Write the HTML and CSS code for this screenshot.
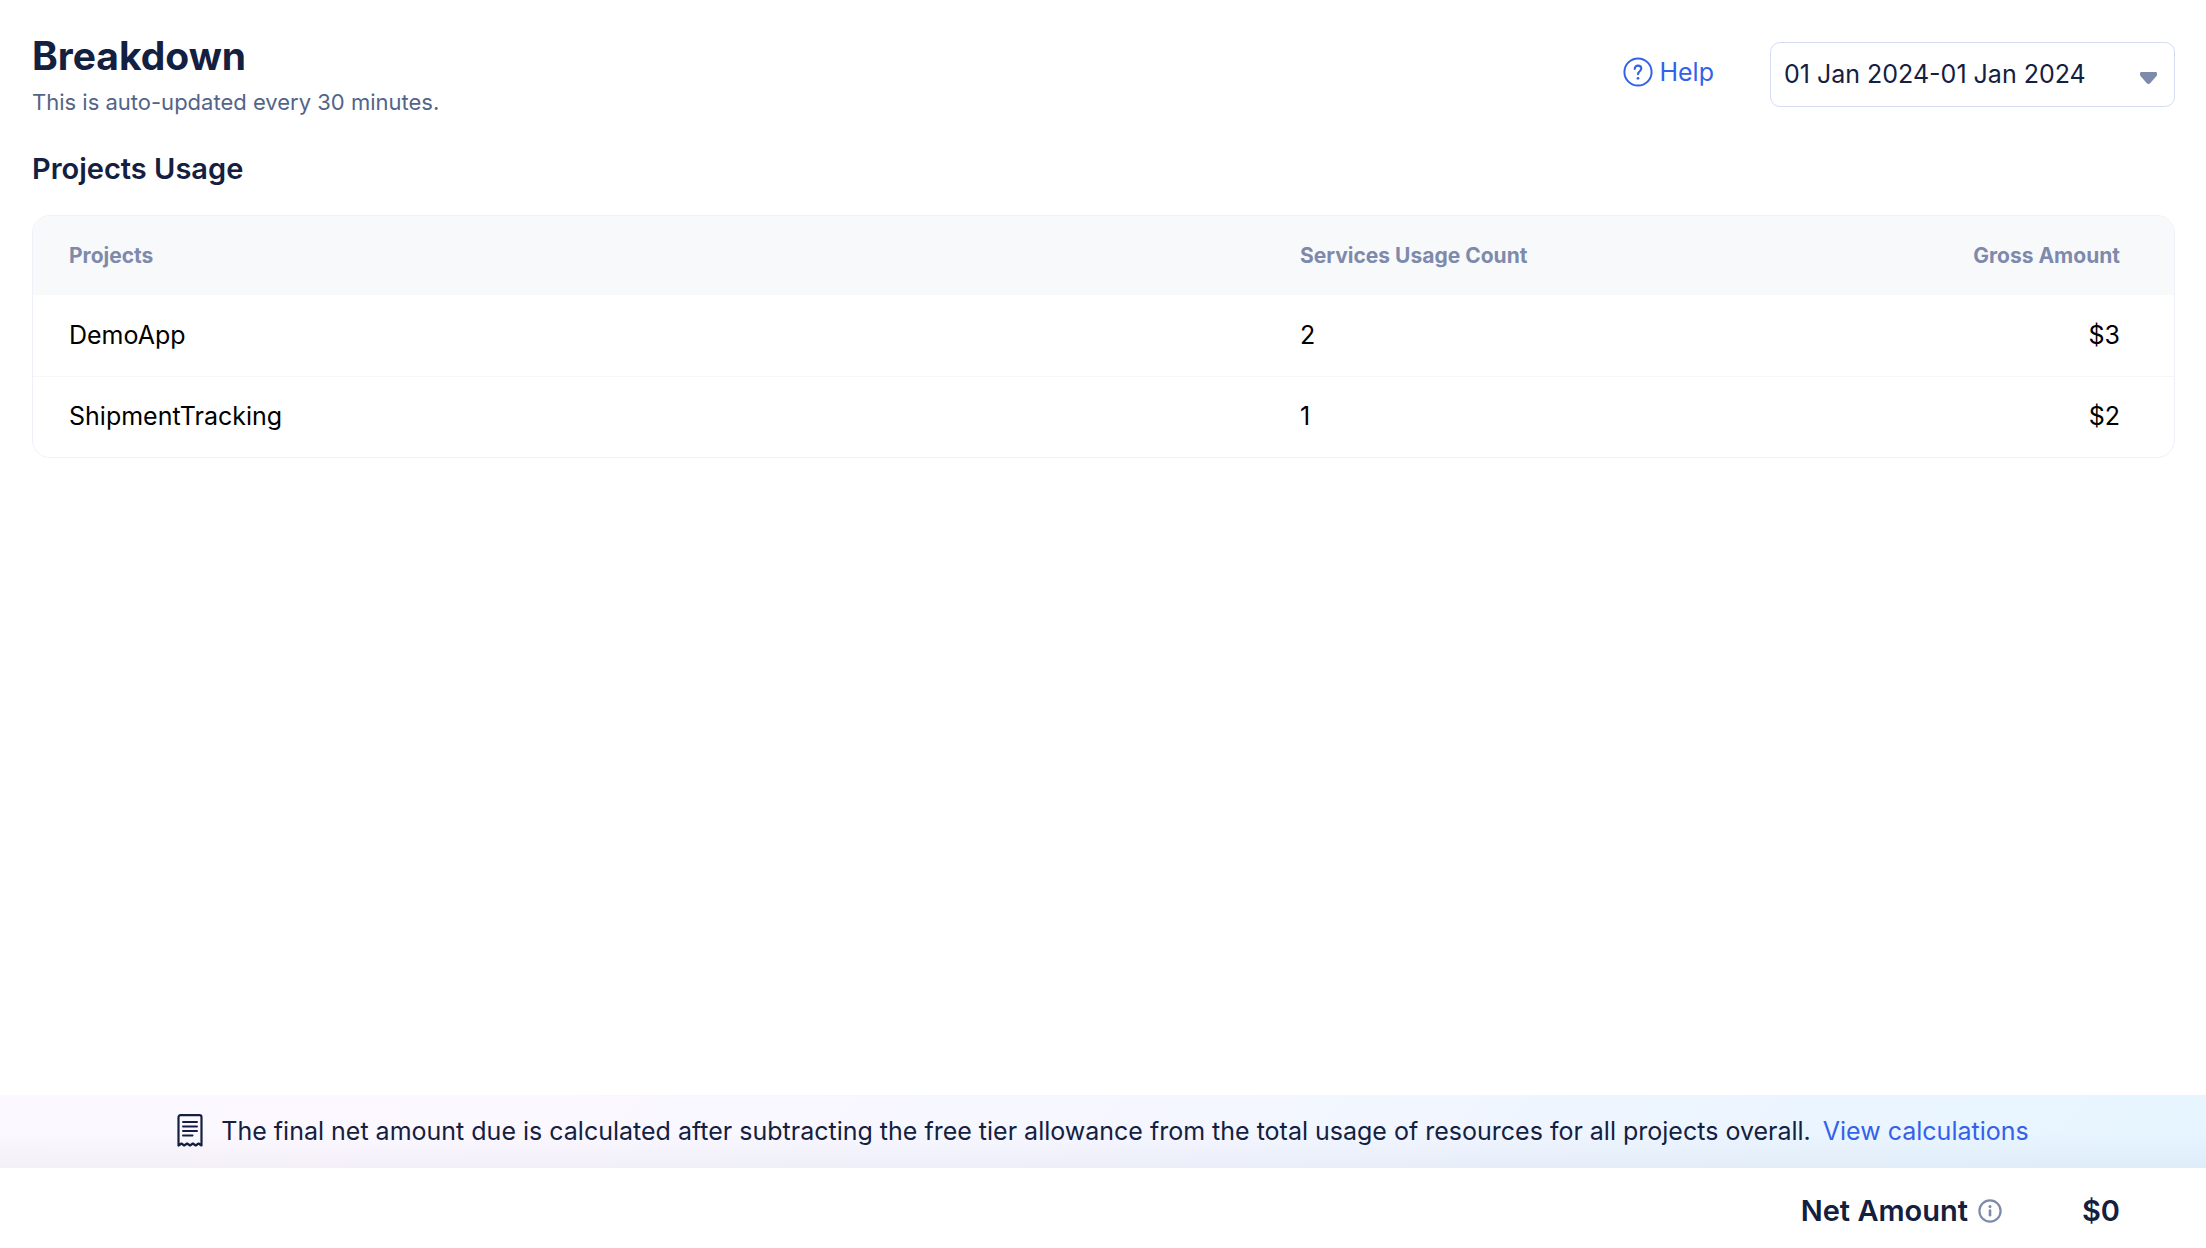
FILE: index.html
```html
<!DOCTYPE html>
<html lang="en">
<head>
<meta charset="utf-8">
<meta name="viewport" content="width=device-width, initial-scale=1">
<title>Breakdown</title>
<link rel="stylesheet" href="styles.css">
</head>
<body>
<main class="content">
  <header class="page-header">
    <div class="heading">
      <h1 class="title">Breakdown</h1>
      <p class="subtitle">This is auto-updated every 30 minutes.</p>
    </div>
    <div class="actions">
      <a class="help" href="#help">
        <svg class="help-icon" viewBox="0 0 30 30" aria-hidden="true">
          <circle cx="15" cy="15" r="13.6" fill="none" stroke="currentColor" stroke-width="2"/>
          <path d="M11.7 11.9c0-2 1.400-3.300 3.300-3.300s3.300 1.300 3.300 3c0 2.600-3.300 2.700-3.300 5.600" fill="none" stroke="currentColor" stroke-width="2.100" stroke-linecap="round"/>
          <circle cx="15" cy="21.300" r="1.400" fill="currentColor"/>
        </svg>
        <span>Help</span>
      </a>
      <div class="period">
        <select class="period-select" aria-label="Billing period">
          <option>01 Jan 2024-01 Jan 2024</option>
        </select>
        <svg class="period-arrow" viewBox="0 0 17 12" aria-hidden="true">
          <path d="M1.500 0h14c1 0 1.500.6 1.500 1.400v1.200c0 .5-.2.900-.5 1.300l-6.300 7.300c-.9 1-2.500 1-3.400 0L.5 3.900C.2 3.500 0 3.100 0 2.600V1.400C0 .6.500 0 1.500 0z" fill="currentColor"/>
        </svg>
      </div>
    </div>
  </header>
  <section class="usage">
    <h2 class="section-title">Projects Usage</h2>
    <div class="table-card">
      <table class="usage-table">
        <thead>
          <tr><th class="col-project" scope="col">Projects</th><th class="col-count" scope="col">Services Usage Count</th><th class="col-amount" scope="col">Gross Amount</th></tr>
        </thead>
        <tbody>
          <tr><td>DemoApp</td><td>2</td><td class="col-amount">$3</td></tr>
          <tr><td>ShipmentTracking</td><td>1</td><td class="col-amount">$2</td></tr>
        </tbody>
      </table>
    </div>
  </section>
</main>
<footer class="summary">
  <div class="notice">
    <svg class="receipt-icon" viewBox="0 0 26 33" aria-hidden="true" fill="none" stroke="currentColor" stroke-width="2.200" stroke-linejoin="round" stroke-linecap="round">
      <path d="M1.500 31.500V3.200a2 2 0 0 1 2-2h19a2 2 0 0 1 2 2v28.300l-2.900-2-2.900 2-2.800-2-2.900 2-2.900-2-2.900 2-2.800-2z"/>
      <path d="M6 8h14M6 12.500h14M6 17h14M6 21.500h9.500" stroke-width="2"/>
    </svg>
    <p class="notice-text">The final net amount due is calculated after subtracting the free tier allowance from the total usage of resources for all projects overall.</p>
    <a class="notice-link" href="#calculations">View calculations</a>
  </div>
  <div class="total">
    <span class="total-label">Net Amount</span>
    <button class="info" type="button" aria-label="About net amount">
      <svg class="info-icon" viewBox="0 0 24 24" aria-hidden="true">
        <circle cx="12" cy="12" r="10.600" fill="none" stroke="currentColor" stroke-width="2.200"/>
        <path d="M12 11.500v4.700" stroke="currentColor" stroke-width="2.600" stroke-linecap="round"/>
        <circle cx="12" cy="7.500" r="1.500" fill="currentColor"/>
      </svg>
    </button>
    <span class="total-value">$0</span>
  </div>
</footer>
</body>
</html>
```
FILE: styles.css
```css
* { box-sizing: border-box; }

body {
  margin: 0;
  min-height: 100vh;
  display: flex;
  flex-direction: column;
  background: #fff;
  color: #14203f;
  font-family: Inter, "Liberation Sans", sans-serif;
  font-size: 25px;
  line-height: 32px;
}

h1, h2, p { margin: 0; }

a { color: #3461ea; text-decoration: none; }

.content { flex: 1; padding: 32px 31px 32px 32px; }

.page-header {
  display: flex;
  justify-content: space-between;
  align-items: flex-start;
}

.title { font-size: 39px; line-height: 48px; font-weight: 700; }

.subtitle {
  margin-top: 6px;
  font-size: 22px;
  color: #536489;
}

.actions { display: flex; align-items: center; gap: 56px; padding-top: 10px; }

.help { display: flex; align-items: center; gap: 6px; padding-bottom: 5px; }

.help-icon { width: 30px; height: 30px; }

.period { position: relative; }

.period-select {
  appearance: none;
  display: block;
  width: 405px;
  height: 65px;
  padding: 0 48px 2px 13px;
  border: 1px solid #d6dcef;
  border-radius: 10px;
  background: #fff;
  color: inherit;
  font: inherit;
}

.period-arrow {
  position: absolute;
  right: 18px;
  top: 30px;
  width: 17px;
  height: 12px;
  color: #7e8aab;
  pointer-events: none;
}

.section-title {
  margin: 34px 0 29px;
  font-size: 29px;
  line-height: 34px;
  font-weight: 600;
}

.table-card {
  border: 1px solid #eff1f8;
  border-radius: 18px;
  overflow: hidden;
}

.usage-table {
  width: 100%;
  border-collapse: collapse;
  table-layout: fixed;
}

.usage-table th,
.usage-table td { padding: 0 36px; text-align: left; }

.usage-table th {
  height: 79px;
  background: #f8f9fb;
  color: #7e8aab;
  font-size: 21px;
  font-weight: 700;
}

.usage-table td { height: 81px; padding-bottom: 1px; color: #000; }

.usage-table tbody tr + tr td { border-top: 1px solid #f6f7fa; }

.usage-table .col-project { width: 57.5%; }
.usage-table .col-count { width: 25%; }
.usage-table .col-amount { padding-right: 54px; text-align: right; }

.notice {
  display: flex;
  justify-content: center;
  align-items: center;
  padding: 19px 32px 21px;
  min-height: 73px;
  background:
    linear-gradient(to bottom, rgba(20, 32, 63, 0) 50%, rgba(20, 32, 63, 0.04)),
    linear-gradient(135deg, #fbf8ff, #fdf8ff 12%, #f7f7ff 45%, #edf5ff 75%, #e6f5ff);
}

.receipt-icon { width: 26px; height: 33px; margin-right: 18px; }

.notice-link { margin-left: 12px; }

.total {
  display: flex;
  justify-content: flex-end;
  align-items: center;
  padding: 23px 86px 17px 32px;
  min-height: 80px;
  font-size: 29px;
  line-height: 40px;
  font-weight: 600;
}

.info {
  display: flex;
  margin: 0 80px 0 10px;
  padding: 0;
  border: 0;
  background: none;
  color: #7e8aab;
}

.info-icon { width: 24px; height: 24px; }
```
